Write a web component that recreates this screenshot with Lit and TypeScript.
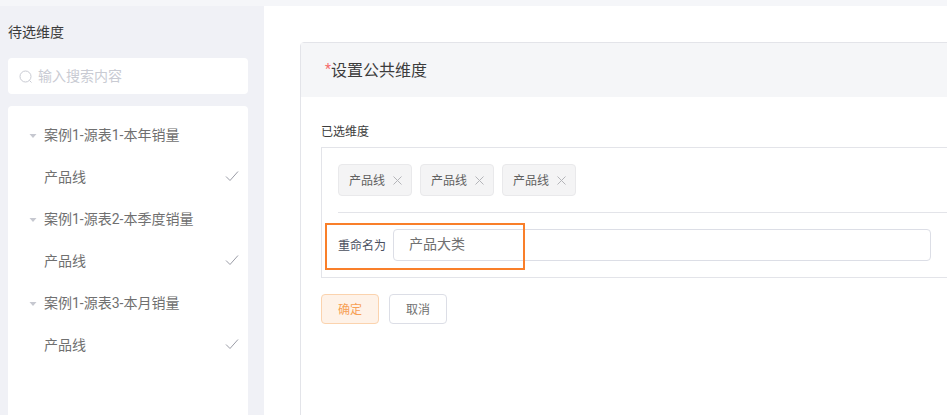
import { LitElement, html, css } from "lit";
import { customElement } from "lit/decorators.js";

const groups = ["案例1-源表1-本年销量", "案例1-源表2-本季度销量", "案例1-源表3-本月销量"];

@customElement("app-root")
export class AppRoot extends LitElement {
  static styles = css`
    :host {
      display: block;
      width: 947px;
      height: 415px;
      overflow: hidden;
      position: relative;
      background: #fff;
      font-family: "Roboto", "Noto Sans CJK SC", sans-serif;
      color: #606266;
    }
    .top { height: 6px; background: #f5f6f9; }
    .main { display: flex; height: 409px; }
    .side {
      width: 264px;
      flex: none;
      box-sizing: border-box;
      background: #f0f1f6;
      padding: 0 16px 0 8px;
    }
    .side-title { margin-top: 15px; height: 22px; line-height: 22px; font-size: 14px; color: #3c3c3c; }
    .search {
      margin-top: 15px;
      height: 36px;
      background: #fff;
      border-radius: 4px;
      display: flex;
      align-items: center;
      padding-left: 11px;
      gap: 5px;
      font-size: 14px;
      color: #c9cbd3;
    }
    .search span { margin-bottom: 2px; }
    .search svg { margin-top: 2px; }
    .list {
      margin-top: 12px;
      height: 320px;
      background: #fff;
      border-radius: 4px 4px 0 0;
      padding-top: 7px;
      box-sizing: border-box;
    }
    .row {
      height: 42px;
      display: flex;
      align-items: center;
      font-size: 14px;
      color: #707070;
      position: relative;
    }
    .group { padding-left: 21px; gap: 7px; }
    .group svg { margin-top: 3px; }
    .item { padding-left: 36px; justify-content: space-between; padding-right: 9px; }
    .content { flex: 1; min-width: 0; padding: 36px 0 0 36px; }
    .panel {
      width: 700px;
      height: 400px;
      box-sizing: border-box;
      border: 1px solid #e3e4e9;
      border-radius: 4px 0 0 0;
    }
    .head {
      height: 54px;
      background: #f5f6f8;
      display: flex;
      align-items: center;
      padding: 0 0 2px 24px;
      box-sizing: border-box;
      font-size: 16px;
      color: #3c3c3c;
    }
    .star { color: #f56c6c; font-size: 14px; }
    .body { padding: 26px 0 0 20px; }
    .label { height: 18px; line-height: 18px; font-size: 12px; color: #3c3c3c; }
    .box {
      margin-top: 6px;
      height: 131px;
      box-sizing: border-box;
      border: 1px solid #e3e4e9;
      padding: 16px 0 0 16px;
    }
    .tags { display: flex; gap: 8px; height: 48px; border-bottom: 1px solid #e3e4e9; }
    .tag {
      width: 74px;
      height: 32px;
      box-sizing: border-box;
      border: 1px solid #e9e9eb;
      border-radius: 4px;
      background: #f4f4f5;
      display: flex;
      align-items: center;
      padding-left: 10px;
      gap: 8px;
      font-size: 12px;
      color: #606060;
    }
    .tag span { margin-bottom: 2px; }
    .rename { display: flex; align-items: center; margin-top: 16px; }
    .rename-label { width: 55px; font-size: 12px; color: #4a4f5e; margin-bottom: 2px; }
    .input {
      width: 538px;
      height: 32px;
      box-sizing: border-box;
      border: 1px solid #dcdee6;
      border-radius: 4px;
      padding-left: 15px;
      line-height: 29px;
      font-size: 14px;
      color: #707070;
    }
    .btns { display: flex; gap: 10px; margin-top: 16px; }
    .btn {
      width: 58px;
      height: 30px;
      box-sizing: border-box;
      border-radius: 4px;
      border: 1px solid #dcdee6;
      display: flex;
      align-items: center;
      justify-content: center;
      padding-bottom: 2px;
      font-size: 12px;
      color: #707070;
      background: #fff;
    }
    .btn.primary { background: #fef2e8; border-color: #fbd3ae; color: #f7a055; }
    .mark {
      position: absolute;
      left: 325px;
      top: 223px;
      width: 200px;
      height: 47px;
      box-sizing: border-box;
      border: 2px solid #f97f2a;
    }
  `;

  private caret() {
    return html`<svg width="8" height="6" viewBox="0 0 8 6"><path d="M.5 1h7L4 5z" fill="#c6c8d0"/></svg>`;
  }
  private check() {
    return html`<svg width="14" height="12" viewBox="0 0 14 12"><path d="M1 6.5l4 4L13 1.5" fill="none" stroke="#9a9ca6" stroke-width="1"/></svg>`;
  }
  private x() {
    return html`<svg width="9" height="9" viewBox="0 0 9 9"><path d="M.5.5l8 8M8.5.5l-8 8" fill="none" stroke="#b4b5b9" stroke-width="1"/></svg>`;
  }

  render() {
    return html`
      <div class="top"></div>
      <div class="main">
        <aside class="side">
          <div class="side-title">待选维度</div>
          <div class="search">
            <svg width="14" height="14" viewBox="0 0 14 14"><circle cx="6.5" cy="6.5" r="5.5" fill="none" stroke="#c9cbd3"/><path d="M10.5 10.5l2 2" stroke="#c9cbd3"/></svg>
            <span>输入搜索内容</span>
          </div>
          <div class="list">
            ${groups.map(
              (g) => html`
                <div class="row group">${this.caret()}<span>${g}</span></div>
                <div class="row item"><span>产品线</span>${this.check()}</div>
              `
            )}
          </div>
        </aside>
        <section class="content">
          <div class="panel">
            <div class="head"><span class="star">*</span><span>设置公共维度</span></div>
            <div class="body">
              <div class="label">已选维度</div>
              <div class="box">
                <div class="tags">
                  ${[0, 1, 2].map(() => html`<div class="tag"><span>产品线</span>${this.x()}</div>`)}
                </div>
                <div class="rename">
                  <div class="rename-label">重命名为</div>
                  <div class="input">产品大类</div>
                </div>
              </div>
              <div class="btns">
                <div class="btn primary">确定</div>
                <div class="btn">取消</div>
              </div>
            </div>
          </div>
        </section>
      </div>
      <div class="mark"></div>
    `;
  }
}
